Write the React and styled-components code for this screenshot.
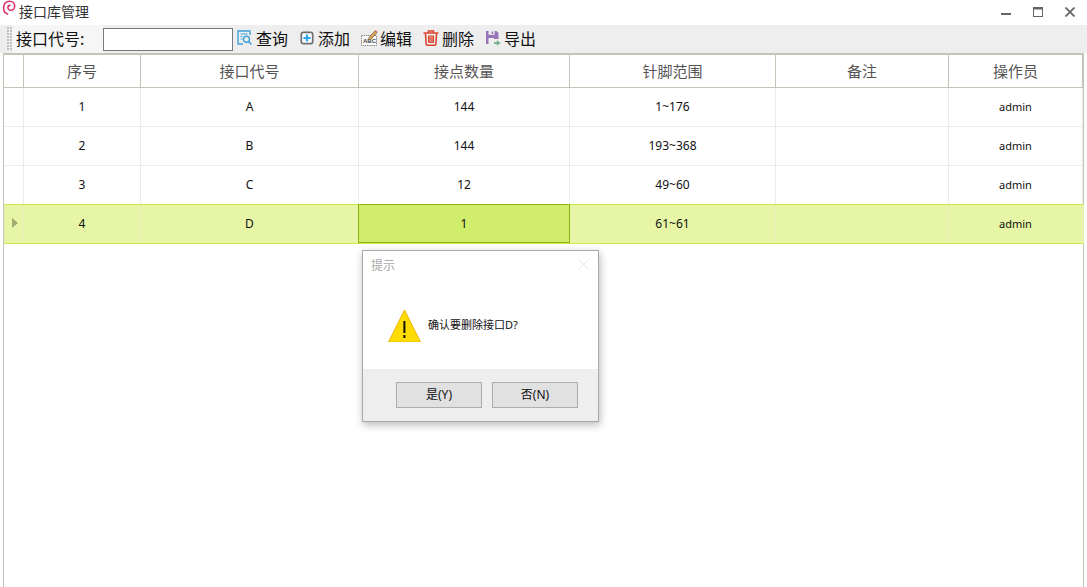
import React from "react";
import styled, { createGlobalStyle } from "styled-components";

const Global = createGlobalStyle`
  html, body { margin: 0; padding: 0; background: #fff; overflow: hidden; }
  body { font-family: "Noto Sans", "Noto Sans CJK SC", sans-serif; }
  * { box-sizing: border-box; }
`;
const COLS = "20px 117px 218px 211px 206px 173px 134px";

const Window = styled.div`
  position: relative; width: 1087px; height: 587px; overflow: hidden; background: #fff;
  display: flex; flex-direction: column;
`;
const TitleBar = styled.div`
  height: 25px; flex: none; display: flex; align-items: center; padding-left: 0; color: #333;
`;
const TitleText = styled.span`
  font-size: 14px; margin-left: 2px; line-height: 24px; padding-bottom: 3px;
  font-family: "Noto Sans CJK SC", sans-serif;
`;
const WinButtons = styled.div`
  margin-left: auto; display: flex; align-items: center; gap: 22px; padding-right: 12px; padding-bottom: 2px;
`;
const Toolbar = styled.div`
  height: 28px; flex: none; background: #eeeeee; display: flex; align-items: center;
  padding-left: 5px; font-size: 16px; color: #111; font-family: "Noto Sans CJK SC", sans-serif;
`;
const Grip = styled.div`
  width: 5px; height: 24px; margin-left: 2px;
  background-image: radial-gradient(circle at 1px 1px, #c0c0c0 1px, transparent 1.1px);
  background-size: 3px 3px;
`;
const FieldLabel = styled.div`
  width: 91px; height: 28px; line-height: 26px; padding-left: 4px; background: #f6f6f6;
`;
const SearchInput = styled.input`
  width: 130px; height: 23px; border: 1px solid #7a7a7a; background: #fff; padding: 0;
`;
const ToolGroup = styled.div`
  display: flex; align-items: center; gap: 11px; margin-left: 4px;
`;
const ToolButton = styled.div`
  display: flex; align-items: center; gap: 3px; white-space: nowrap; line-height: 26px; padding-bottom: 2px;
`;
const IconSlot = styled.span`
  width: 16px; height: 18px; display: flex; align-items: center; justify-content: center; flex: none;
`;
const Grid = styled.div`
  flex: 1; margin-left: 3px; width: 1081px; border: 1px solid #c4c4b8; border-top-width: 2px; border-bottom: none;
  display: flex; flex-direction: column; background: #fff;
`;
const Header = styled.div`
  display: grid; grid-template-columns: ${COLS}; height: 33px; flex: none; border-bottom: 1px solid #c4c4b8;
`;
const HeadCell = styled.div`
  border-right: 1px solid #c4c4b8; display: flex; align-items: center; justify-content: center; padding-bottom: 2px;
  font-size: 15px; color: #555; font-family: "Noto Sans CJK SC", sans-serif;
`;
const Row = styled.div`
  display: grid; grid-template-columns: ${COLS}; height: 39px; flex: none;
  margin-right: ${p => (p.$active ? "-1px" : "0")};
  border-bottom: 1px solid ${p => (p.$active ? "#cde84c" : "#ececec")};
  background: ${p => (p.$active ? "#e6f6a6" : "#fff")};
  ${p => p.$active && "box-shadow: 0 -1px 0 #cde84c;"}
`;
const Cell = styled.div`
  border-right: 1px solid ${p => (p.$active ? "#e8eebd" : "#ececec")};
  display: flex; align-items: center; justify-content: center; font-size: 12px; color: #111;
  padding-bottom: 2px;
`;
const UserCell = styled(Cell)`
  font-size: 11px;
`;
const SelectedCell = styled(Cell)`
  background: #d1ed6c; border: 1px solid #8fb312; margin: -1px 0 0 -1px; height: 39px; padding-top: 1px;
`;
const Marker = styled.div`
  width: 0; height: 0; border-left: 6px solid #a3ac72; border-top: 5px solid transparent; border-bottom: 5px solid transparent;
  margin-left: 2px;
`;
const Dialog = styled.div`
  position: absolute; left: 362px; top: 250px; width: 237px; height: 172px; background: #fff;
  border: 1px solid #a8a8a8; box-shadow: 1px 3px 8px rgba(0,0,0,.28);
  display: flex; flex-direction: column;
`;
const DialogHead = styled.div`
  height: 30px; flex: none; display: flex; align-items: center; justify-content: space-between;
  padding: 0 9px 4px 8px; font-size: 12px; color: #a9a9a9; font-family: "Noto Sans CJK SC", sans-serif;
`;
const DialogBody = styled.div`
  flex: 1; display: flex; align-items: center; padding: 0 0 0 25px; gap: 7px; font-size: 11px; color: #111;
  font-family: "Noto Sans", "Noto Sans CJK SC", sans-serif;
`;
const DialogMessage = styled.span`
  padding-bottom: 2px;
`;
const DialogFoot = styled.div`
  height: 52px; flex: none; background: #eeeeee; display: flex; align-items: flex-start; padding: 13px 0 0 33px; gap: 10px;
`;
const DialogBtn = styled.div`
  width: 86px; height: 26px; background: #e1e1e1; border: 1px solid #adadad; display: flex; align-items: center; justify-content: center;
  font-size: 12px; color: #111; padding-bottom: 2px;
`;

const Logo = () => (
  <svg width="17" height="18" viewBox="0 0 17 18" fill="none" style={{ marginTop: -9 }}>
    <path d="M7.5 15C4.5 13.8 3.2 11 3.7 7.8 4.2 4.4 6.6 2.2 9.5 2.2c3 0 5.2 2.1 5.2 4.8 0 2.5-1.9 4.3-3.9 4.3-1.7 0-2.9-1.2-2.9-2.7 0-1.2.8-2.1 2-2.2" stroke="#dc3468" strokeWidth="1.6" strokeLinecap="round"/>
  </svg>
);
const IconQuery = () => (
  <svg width="16" height="16" viewBox="0 0 16 16" fill="none">
    <path d="M13 5V1H1v13h5" stroke="#3fa3dc" strokeWidth="1.4"/>
    <path d="M3.5 4h7M3.5 6.5H5.5M3.5 9H5.5" stroke="#3fa3dc" strokeWidth="1"/>
    <circle cx="9.5" cy="9.3" r="3" stroke="#3fa3dc" strokeWidth="1.4"/>
    <path d="M11.5 11.5l3 3" stroke="#3fa3dc" strokeWidth="1.6"/>
  </svg>
);
const IconAdd = () => (
  <svg width="15" height="15" viewBox="0 0 15 15" fill="none">
    <rect x="1.3" y="1.3" width="11.4" height="11.4" rx="2.2" stroke="#6f6f6f" strokeWidth="1.7" fill="#fff"/>
    <path d="M7 3.4v7.2M3.4 7h7.2" stroke="#2fa8ea" strokeWidth="2.2"/>
  </svg>
);
const IconEdit = () => (
  <svg width="17" height="16" viewBox="0 0 17 16" fill="none" style={{ flex: "none" }}>
    <rect x="0.5" y="5.5" width="15" height="10" fill="#fdfdfd" stroke="#8a8a8a" strokeDasharray="1.5 .7"/>
    <text x="2" y="12.6" fontSize="6" fontWeight="700" fontFamily="Liberation Sans, sans-serif" fill="#444">ABC</text>
    <path d="M8 7.5L14 .8l2 1.8-6 6.8-2.4.6z" fill="#d9a65a" stroke="#6e5a3a" strokeWidth=".7"/>
    <path d="M14 .8l2 1.8.7-.9-2-1.7z" fill="#d77"/>
  </svg>
);
const IconDelete = () => (
  <svg width="16" height="16" viewBox="0 0 16 16" fill="none">
    <path d="M.5 3h15M5.5 2.5V1h5v1.5" stroke="#d9442f" strokeWidth="1.5"/>
    <path d="M2.5 3.5l.6 10.5c.1 1 .7 1.3 1.5 1.3h6.8c.8 0 1.4-.3 1.5-1.3l.6-10.5" stroke="#d9442f" strokeWidth="1.6"/>
    <rect x="5" y="5.5" width="6" height="7.5" fill="#d9442f"/>
    <path d="M7 6v6.5M9 6v6.5" stroke="#f3c6bb" strokeWidth=".8"/>
  </svg>
);
const IconExport = () => (
  <svg width="16" height="16" viewBox="0 0 16 16" fill="none">
    <path d="M1 1h10.5L13.5 3v6H9v5H1z" fill="#9a74b8"/>
    <rect x="3.5" y="1" width="6" height="3.8" fill="#eee"/>
    <rect x="6.5" y="1.6" width="1.6" height="2.4" fill="#9a74b8"/>
    <rect x="3.5" y="8" width="5.5" height="6" fill="#eee"/>
    <path d="M9 13h3.5" stroke="#6fae8c" strokeWidth="1.8"/>
    <path d="M11.8 10.2L15.6 13l-3.8 2.8z" fill="#6fae8c"/>
  </svg>
);
const IconMin = () => (
  <svg width="10" height="10" viewBox="0 0 10 10"><rect x="0" y="6" width="10" height="2" fill="#666"/></svg>
);
const IconMax = () => (
  <svg width="10" height="10" viewBox="0 0 10 10" fill="none"><rect x=".5" y=".5" width="9" height="9" stroke="#666"/><rect x="0" y="0" width="10" height="2.5" fill="#666"/></svg>
);
const IconClose = () => (
  <svg width="10" height="10" viewBox="0 0 10 10"><path d="M.5.5l9 9M9.5.5l-9 9" stroke="#666" strokeWidth="1.8"/></svg>
);
const IconDlgClose = () => (
  <svg width="11" height="11" viewBox="0 0 11 11"><path d="M.5.5l10 10M10.5.5l-10 10" stroke="#e6e6e6" strokeWidth="1"/></svg>
);
const IconWarn = () => (
  <svg width="33" height="33" viewBox="0 0 33 33">
    <path d="M16.5 1L32.5 33H.5z" fill="#ffdc00" stroke="#f0b400" strokeWidth="1" strokeLinejoin="round"/>
    <rect x="15.4" y="12" width="2" height="12" fill="#111"/>
    <rect x="15.4" y="26" width="2" height="3" fill="#111"/>
  </svg>
);

const headers = ["", "序号", "接口代号", "接点数量", "针脚范围", "备注", "操作员"];
const rows = [
  ["1", "A", "144", "1~176", "", "admin"],
  ["2", "B", "144", "193~368", "", "admin"],
  ["3", "C", "12", "49~60", "", "admin"],
  ["4", "D", "1", "61~61", "", "admin"],
];
const tools = [
  ["查询", IconQuery],
  ["添加", IconAdd],
  ["编辑", IconEdit],
  ["删除", IconDelete],
  ["导出", IconExport],
];

export default function App() {
  return (
    <Window>
      <Global />
      <TitleBar>
        <Logo />
        <TitleText>接口库管理</TitleText>
        <WinButtons><IconMin /><IconMax /><IconClose /></WinButtons>
      </TitleBar>
      <Toolbar>
        <Grip />
        <FieldLabel>接口代号:</FieldLabel>
        <SearchInput />
        <ToolGroup>
          {tools.map(([label, Icon]) => (
            <ToolButton key={label}><IconSlot><Icon /></IconSlot>{label}</ToolButton>
          ))}
        </ToolGroup>
      </Toolbar>
      <Grid>
        <Header>
          {headers.map((h, i) => <HeadCell key={i}>{h}</HeadCell>)}
        </Header>
        {rows.map((r, i) => {
          const active = i === 3;
          return (
            <Row key={i} $active={active}>
              <Cell $active={active}>{active && <Marker />}</Cell>
              {r.map((c, j) => {
                if (active && j === 2) return <SelectedCell key={j}>{c}</SelectedCell>;
                if (j === 5) return <UserCell key={j} $active={active}>{c}</UserCell>;
                return <Cell key={j} $active={active}>{c}</Cell>;
              })}
            </Row>
          );
        })}
      </Grid>
      <Dialog>
        <DialogHead>提示<IconDlgClose /></DialogHead>
        <DialogBody><IconWarn /><DialogMessage>确认要删除接口D?</DialogMessage></DialogBody>
        <DialogFoot>
          <DialogBtn>是(Y)</DialogBtn>
          <DialogBtn>否(N)</DialogBtn>
        </DialogFoot>
      </Dialog>
    </Window>
  );
}
